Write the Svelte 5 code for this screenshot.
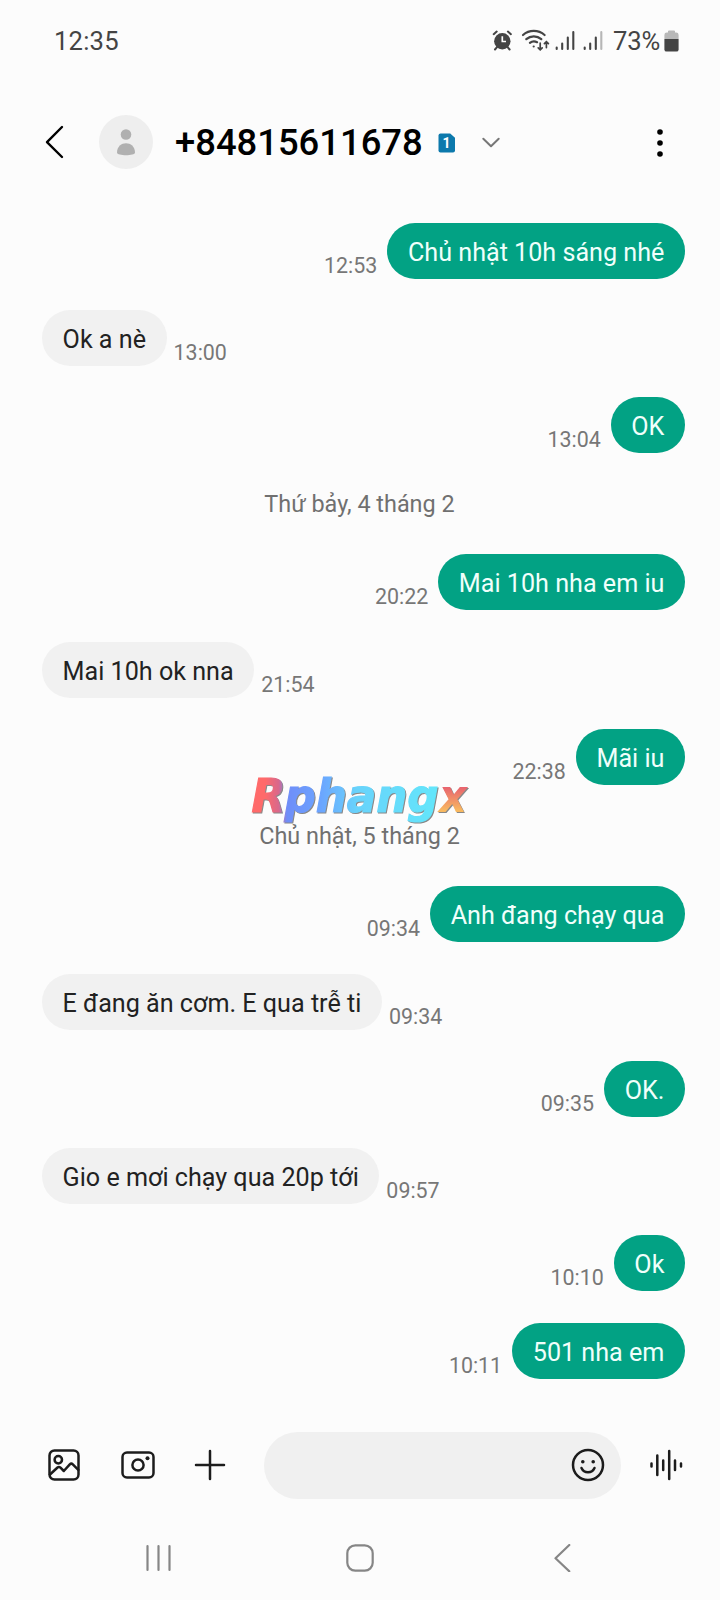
<script lang="ts">
  type Item = { kind: 'sent' | 'received' | 'date'; text: string; time?: string; logo?: boolean };

  const contact = '+84815611678';

  const items: Item[] = [
    { kind: 'sent', text: 'Chủ nhật 10h sáng nhé', time: '12:53' },
    { kind: 'received', text: 'Ok a nè', time: '13:00' },
    { kind: 'sent', text: 'OK', time: '13:04' },
    { kind: 'date', text: 'Thứ bảy, 4 tháng 2' },
    { kind: 'sent', text: 'Mai 10h nha em iu', time: '20:22' },
    { kind: 'received', text: 'Mai 10h ok nna', time: '21:54' },
    { kind: 'sent', text: 'Mãi iu', time: '22:38' },
    { kind: 'date', text: 'Chủ nhật, 5 tháng 2', logo: true },
    { kind: 'sent', text: 'Anh đang chạy qua', time: '09:34' },
    { kind: 'received', text: 'E đang ăn cơm. E qua trễ ti', time: '09:34' },
    { kind: 'sent', text: 'OK.', time: '09:35' },
    { kind: 'received', text: 'Gio e mơi chạy qua 20p tới', time: '09:57' },
    { kind: 'sent', text: 'Ok', time: '10:10' },
    { kind: 'sent', text: '501 nha em', time: '10:11' }
  ];
</script>

<div class="screen">
  <div class="status-bar">
    <span class="clock">12:35</span>
    <div class="status-icons">
      <svg class="indicators" width="120" height="24" viewBox="0 0 120 24">
        <!-- alarm -->
        <g fill="#444" stroke="#444" stroke-linecap="round">
          <circle cx="10.3" cy="12.2" r="8.2" stroke="none" />
          <path d="M1.7 5.2 4.7 2.6M18.9 5.2l-3-2.6M5 18.1l-2 2.4M15.6 18.1l2 2.4" stroke-width="2" fill="none" />
          <path d="M10.3 7.3v5.2h3.7" stroke="#fcfcfc" stroke-width="1.7" stroke-linecap="butt" fill="none" />
        </g>
        <!-- wifi -->
        <g fill="none" stroke="#444" stroke-width="2.2" stroke-linecap="round">
          <path d="M31 6a16.5 16.5 0 0 1 21.6 0M34.3 10.2a11.4 11.4 0 0 1 15 0M37.9 13.9a6.3 6.3 0 0 1 7.2-.7" />
          <circle cx="41.7" cy="17.5" r="1.1" fill="#444" stroke="none" />
          <path d="M48.2 14.2v6M46.2 18.900l2 2 2-2M54.400 18.600v-5M52.400 14.700l2-2 2 2" stroke-width="1.700" />
        </g>
        <!-- signal -->
        <g stroke="#444" stroke-width="2.1" stroke-linecap="round">
          <path d="M64.7 18.5V20M70.2 14.5V20M75.8 8.5V20M81.3 3V20" />
          <path d="M92.7 18.5V20M98.2 14.5V20M103.8 8.5V20" />
          <path d="M109.3 3V20" stroke="#b6b6b6" />
        </g>
      </svg>
      <span class="percent">73%</span>
      <svg width="15" height="22" viewBox="0 0 15 22">
        <path d="M4 2.6V1.3Q4 .4 5 .4h5q1 0 1 .9v1.3h1.2Q14.6 2.6 14.6 5V9H.4V5q0-2.4 2.4-2.4z" fill="#b8b8b8" />
        <path d="M.4 9h14.2v10.4q0 2.2-2.2 2.2H2.6Q.4 21.6.4 19.4z" fill="#444" />
      </svg>
    </div>
  </div>

  <header>
    <svg width="20" height="36" viewBox="0 0 20 36">
      <path d="M17 3 2 18.2l15 14.8" fill="none" stroke="#000" stroke-width="2.4" stroke-linecap="round" stroke-linejoin="round" />
    </svg>
    <div class="avatar">
      <svg width="54" height="54" viewBox="0 0 54 54" fill="#b0b0b0">
        <circle cx="27" cy="19.5" r="5.3" />
        <path d="M18 37.5c0-12.5 18-12.5 18 0 0 3.6-18 3.6-18 0z" />
      </svg>
    </div>
    <h1>{contact}</h1>
    <svg class="sim" width="18" height="20" viewBox="0 0 18 20">
      <path d="M2.5.5h9.700l4.800 4.300v12.700q0 2-2 2H2.500q-2 0-2-2v-15q0-2 2-2z" fill="#0c79ac" />
      <text x="8.6" y="14.7" text-anchor="middle" fill="#fff">1</text>
    </svg>
    <svg class="chevron" width="20" height="12" viewBox="0 0 20 12">
      <path d="M2.3 1.8 10 9.3l7.7-7.5" fill="none" stroke="#777" stroke-width="2" stroke-linecap="round" stroke-linejoin="round" />
    </svg>
    <svg class="more" width="8" height="30" viewBox="0 0 8 30">
      <circle cx="4" cy="4" r="2.8" />
      <circle cx="4" cy="15" r="2.8" />
      <circle cx="4" cy="26" r="2.8" />
    </svg>
  </header>

  <main>
    {#each items as item}
      {#if item.kind === 'date'}
        <div class="date">
          {#if item.logo}
            <svg class="logo" width="240" height="64" viewBox="0 0 240 64">
              <defs>
                <linearGradient id="logoFill" x1="0" y1="0" x2="230" y2="0" gradientUnits="userSpaceOnUse">
                  <stop offset="0.1" stop-color="#ff6a6a" />
                  <stop offset="0.16" stop-color="#d8688c" />
                  <stop offset="0.195" stop-color="#6f8df8" />
                  <stop offset="0.34" stop-color="#6ba4ff" />
                  <stop offset="0.5" stop-color="#68d3fb" />
                  <stop offset="0.85" stop-color="#63e6fb" />
                </linearGradient>
                <linearGradient id="logoTail" x1="0" y1="44" x2="0" y2="18" gradientUnits="userSpaceOnUse">
                  <stop offset="0.1" stop-color="#f8b860" />
                  <stop offset="1" stop-color="#e8636f" />
                </linearGradient>
              </defs>
              <text y="43">
                <tspan class="fat" x="9.5" textLength="34" lengthAdjust="spacingAndGlyphs">R</tspan><tspan class="fat" x="42.5" textLength="154" lengthAdjust="spacingAndGlyphs">phang</tspan><tspan x="197" textLength="28" lengthAdjust="spacingAndGlyphs" fill="url(#logoTail)">x</tspan>
              </text>
            </svg>
          {/if}
          <span>{item.text}</span>
        </div>
      {:else}
        <div class="row {item.kind}">
          <div class="bubble">{item.text}</div>
          <span class="time">{item.time}</span>
        </div>
      {/if}
    {/each}
  </main>

  <div class="composer">
    <svg width="32" height="32" viewBox="0 0 32 32">
      <rect x="1.5" y="1.5" width="29" height="29" rx="5" />
      <circle cx="10.3" cy="10.8" r="3.7" />
      <path d="M2 25.5 9.5 18.5q1.5-1.2 3 .2l3.3 3.3 6-6.6q1.5-1.5 3 0l5.5 5.4" />
    </svg>
    <svg class="camera" width="34" height="30" viewBox="0 0 34 30">
      <rect x="1.5" y="2.5" width="31" height="25" rx="4.5" />
      <circle cx="17" cy="15" r="5.6" />
      <circle cx="26.5" cy="8.3" r="2" class="solid" />
    </svg>
    <svg class="plus" width="32" height="32" viewBox="0 0 32 32">
      <path d="M16 2v28M2 16h28" />
    </svg>
    <div class="input">
      <svg width="34" height="34" viewBox="0 0 34 34">
        <circle cx="17" cy="17" r="15" />
        <circle cx="11.8" cy="13.8" r="1.8" class="solid" />
        <circle cx="22.2" cy="13.8" r="1.8" class="solid" />
        <path d="M10.5 20c2.5 5.7 10.5 5.7 13 0" />
      </svg>
    </div>
    <svg class="voice" width="34" height="34" viewBox="0 0 34 34">
      <path d="M2.5 15.5v3M8.3 7.5v19.5M14.2 12.5v9.5M20.2 3v28M26 12.5v9.5M32 15.5v3" />
    </svg>
  </div>

  <nav>
    <svg width="28" height="28" viewBox="0 0 28 28">
      <path d="M3.5 2v24M14.5 2v24M25.5 2v24" />
    </svg>
    <svg width="28" height="28" viewBox="0 0 28 28">
      <rect x="1.3" y="1.3" width="25.4" height="25.4" rx="8" />
    </svg>
    <svg width="28" height="28" viewBox="0 0 28 28">
      <path d="M21.3 1 7.5 14.3l13.800 13" />
    </svg>
  </nav>
</div>

<style>
  :global(body) {
    background: #fcfcfc;
  }

  .screen {
    box-sizing: border-box;
    width: 720px;
    height: 1600px;
    display: flex;
    flex-direction: column;
    overflow: hidden;
    background: #fcfcfc;
    font-family: Roboto, 'Noto Sans', sans-serif;
  }

  svg {
    display: block;
    flex: none;
  }

  .status-bar {
    height: 81px;
    padding: 0 41px 0 54px;
    display: flex;
    align-items: center;
    justify-content: space-between;
    color: #444;
    font-size: 25.6px;
  }

  .clock {
    letter-spacing: 0.2px;
  }

  .status-icons {
    display: flex;
    align-items: center;
  }

  .indicators {
    margin-right: 1px;
  }

  .percent {
    letter-spacing: -0.2px;
    margin-right: 4px;
  }

  header {
    height: 121px;
    padding: 0 56px 0 45px;
    display: flex;
    align-items: center;
  }

  .avatar {
    width: 54px;
    height: 54px;
    margin-left: 34px;
    border-radius: 50%;
    background: #eee;
  }

  h1 {
    margin: 0 0 0 22px;
    padding-top: 3px;
    font-size: 36.4px;
    font-weight: 500;
    line-height: 42px;
    color: #000;
  }

  .sim {
    margin: 2px 0 0 15px;
  }

  .sim text {
    font-size: 14px;
    font-weight: 700;
  }

  .chevron {
    margin: 2px 0 0 25px;
  }

  .more {
    margin: 2px 0 0 auto;
    fill: #000;
  }

  main {
    flex: 1;
    padding: 20.5px 35px 0 42px;
    display: flex;
    flex-direction: column;
    gap: 31.3px;
  }

  .row {
    display: flex;
    align-items: flex-end;
    gap: 7px;
  }

  .sent {
    flex-direction: row-reverse;
    gap: 10px;
  }

  .bubble {
    box-sizing: border-box;
    height: 56px;
    padding: 0 20.6px;
    border-radius: 28px;
    font-size: 25.15px;
    line-height: 59px;
    white-space: nowrap;
    background: #f1f1f1;
    color: #222;
  }

  .sent .bubble {
    background: #02a284;
    color: #f0fffb;
  }

  .time {
    font-size: 21.4px;
    line-height: 26px;
    color: #777;
  }

  .date {
    position: relative;
    height: 38.7px;
    margin-left: -8px;
    line-height: 41px;
    text-align: center;
    font-size: 23.4px;
    color: #707070;
  }

  .date span {
    position: relative;
  }

  .logo {
    position: absolute;
    left: 208px;
    top: -47.5px;
    overflow: visible;
    filter: drop-shadow(1px 1px 0.5px #888);
  }

  .logo text {
    font-family: 'DejaVu Sans', sans-serif;
    font-size: 46px;
    font-weight: 700;
    font-style: italic;
  }

  .logo .fat {
    fill: url(#logoFill);
    stroke: url(#logoFill);
    stroke-width: 1.2px;
  }

  .composer {
    height: 68px;
    padding: 0 37px 0 48px;
    display: flex;
    align-items: center;
  }

  .composer svg {
    fill: none;
    stroke: #1c1c1c;
    stroke-width: 2.5;
    stroke-linecap: round;
    stroke-linejoin: round;
  }

  .composer .solid {
    fill: #1c1c1c;
    stroke: none;
  }

  .camera {
    margin-left: 41px;
  }

  .plus {
    margin-left: 39px;
  }

  .input {
    box-sizing: border-box;
    width: 357px;
    height: 67px;
    margin-left: 38px;
    padding-right: 16px;
    display: flex;
    align-items: center;
    justify-content: flex-end;
    border-radius: 34px;
    background: #f0f0f0;
  }

  .voice {
    margin-left: auto;
  }

  nav {
    box-sizing: border-box;
    height: 101px;
    padding: 16px 144px 0;
    display: flex;
    align-items: center;
    justify-content: space-between;
  }

  nav svg {
    fill: none;
    stroke: #868686;
    stroke-width: 2.2;
    stroke-linecap: round;
    stroke-linejoin: round;
  }
</style>
